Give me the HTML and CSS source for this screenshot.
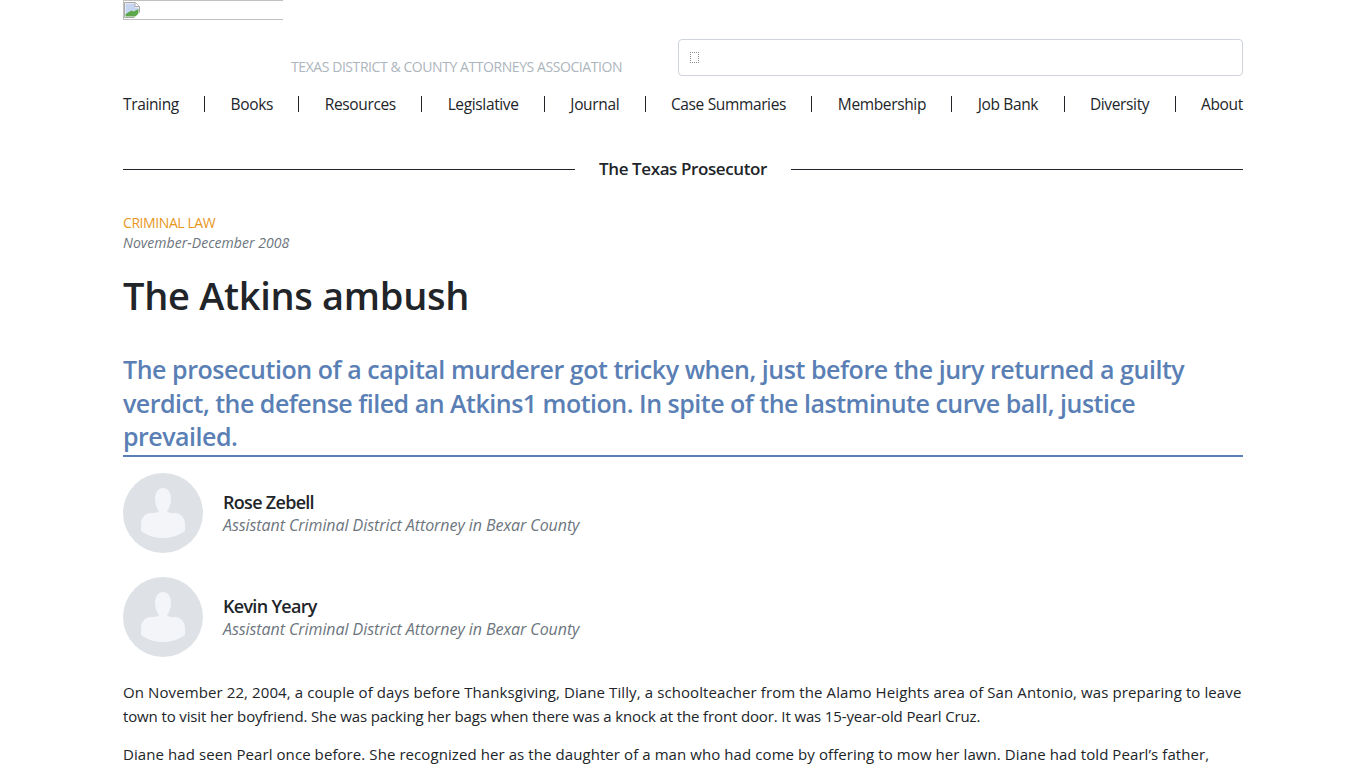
FILE: index.html
```html
<!DOCTYPE html>
<html lang="en">
<head>
    <meta charset="UTF-8">
    <meta name="viewport" content="width=device-width, initial-scale=1.0">
    <title>The Atkins ambush - TDCAA</title>
    <link rel="stylesheet" href="styles.css">
</head>
<body>
    <div class="container">
        <header class="header">
            <div class="brand">
                <div class="logo">
                    <svg class="broken-icon" width="16" height="16" viewBox="0 0 16 16">
                        <path d="M.5 .5h11l4 4v11h-15z" fill="#fff" stroke="#a9a9a9"/>
                        <path d="M1.500 1.500h9.500v4h3.500v2.500l-13 4z" fill="#c5d5f2"/>
                        <path d="M1.500 14.500v-2.500l6-3.500 2 1 5-2.500v7.500z" fill="#5ca84a"/>
                        <path d="M11 .5v4h4.500" fill="#fff" stroke="#a9a9a9"/>
                        <path d="M10 16l6-6v6z" fill="#fff"/>
                    </svg>
                </div>
                <div class="tagline">TEXAS DISTRICT &amp; COUNTY ATTORNEYS ASSOCIATION</div>
            </div>
            <div class="search"><span class="search-icon"></span></div>
        </header>

        <nav class="nav">
            <a href="#">Training</a><span class="sep"></span>
            <a href="#">Books</a><span class="sep"></span>
            <a href="#">Resources</a><span class="sep"></span>
            <a href="#">Legislative</a><span class="sep"></span>
            <a href="#">Journal</a><span class="sep"></span>
            <a href="#">Case Summaries</a><span class="sep"></span>
            <a href="#">Membership</a><span class="sep"></span>
            <a href="#">Job Bank</a><span class="sep"></span>
            <a href="#">Diversity</a><span class="sep"></span>
            <a href="#">About</a>
        </nav>

        <div class="section-title">The Texas Prosecutor</div>

        <div class="category">CRIMINAL LAW</div>
        <div class="issue">November-December 2008</div>
        <h1>The Atkins ambush</h1>
        <h2>The prosecution of a capital murderer got tricky when, just before the jury returned a guilty verdict, the defense filed an Atkins1 motion. In spite of the lastminute curve ball, justice prevailed.</h2>

        <div class="author">
            <svg class="avatar" viewBox="0 0 80 80">
                <circle cx="40" cy="40" r="40" fill="#dee2e6"/>
                <path d="M40 15c5 0 8 4.500 8 11 0 5-2 9.500-4 12.500 2 1 4 1.500 8 1.500 6 0 10 5 10 11v7c-6 4.500-14 7-22 7s-16-2.500-22-7v-7c0-6 4-11 10-11 4 0 6-.5 8-1.500-2-3-4-7.500-4-12.500 0-6.500 3-11 8-11z" fill="#f3f5f8"/>
            </svg>
            <div class="author-text">
                <div class="author-name">Rose Zebell</div>
                <div class="author-role">Assistant Criminal District Attorney in Bexar County</div>
            </div>
        </div>
        <div class="author">
            <svg class="avatar" viewBox="0 0 80 80">
                <circle cx="40" cy="40" r="40" fill="#dee2e6"/>
                <path d="M40 15c5 0 8 4.500 8 11 0 5-2 9.500-4 12.500 2 1 4 1.500 8 1.500 6 0 10 5 10 11v7c-6 4.500-14 7-22 7s-16-2.500-22-7v-7c0-6 4-11 10-11 4 0 6-.5 8-1.500-2-3-4-7.500-4-12.500 0-6.500 3-11 8-11z" fill="#f3f5f8"/>
            </svg>
            <div class="author-text">
                <div class="author-name">Kevin Yeary</div>
                <div class="author-role">Assistant Criminal District Attorney in Bexar County</div>
            </div>
        </div>

        <p>On November 22, 2004, a couple of days before Thanksgiving, Diane Tilly, a schoolteacher from the Alamo Heights area of San Antonio, was preparing to leave town to visit her boyfriend. She was packing her bags when there was a knock at the front door. It was 15-year-old Pearl Cruz.</p>
        <p>Diane had seen Pearl once before. She recognized her as the daughter of a man who had come by offering to mow her lawn. Diane had told Pearl’s father,</p>
    </div>
</body>
</html>
```

FILE: styles.css
```css
html, body {
    height: 768px;
    overflow: hidden;
}
body {
    margin: 0;
    background: #fff;
    color: #212529;
    font-family: "Open Sans", sans-serif;
    font-size: 15px;
    line-height: 24px;
}
.container {
    width: 1120px;
    margin: 0 auto;
}
.header {
    display: flex;
    justify-content: space-between;
    height: 92px;
}
.logo {
    width: 160px;
    height: 20px;
    box-sizing: border-box;
    border: 1px solid #c0c0c0;
    border-right: none;
    line-height: 0;
}
.broken-icon {
    margin: 1px 0 0 0;
}
.tagline {
    margin: 37px 0 0 168px;
    font-size: 14px;
    letter-spacing: -0.43px;
    line-height: 20px;
    color: #adb5bd;
    white-space: nowrap;
}
.search {
    width: 565px;
    height: 37px;
    margin-top: 39px;
    box-sizing: border-box;
    border: 1px solid #ced4da;
    border-radius: 4px;
    display: flex;
    align-items: center;
    padding-left: 11px;
}
.search-icon {
    width: 7px;
    height: 9px;
    border: 1px dotted #8a8f96;
}
.nav {
    display: flex;
    justify-content: space-between;
    align-items: center;
    height: 24px;
    font-size: 15.500px;
    letter-spacing: -0.36px;
}
.nav a {
    color: #212529;
    text-decoration: none;
}
.sep {
    width: 1px;
    height: 16px;
    background: #212529;
}
.section-title {
    display: flex;
    align-items: center;
    gap: 24px;
    margin-top: 39px;
    height: 28px;
    font-size: 17px;
    font-weight: 600;
    letter-spacing: -0.4px;
}
.section-title::before,
.section-title::after {
    content: "";
    flex: 1;
    height: 1px;
    background: #212529;
}
.category {
    margin-top: 30px;
    font-size: 14px;
    line-height: 20px;
    color: #e8961e;
    letter-spacing: -0.42px;
}
.issue {
    font-size: 14px;
    line-height: 20px;
    font-style: italic;
    color: #6c757d;
    letter-spacing: 0.05px;
}
h1 {
    margin: 16px 0 0;
    font-size: 38px;
    font-weight: 600;
    line-height: 52px;
    letter-spacing: -0.3px;
}
h2 {
    margin: 32px 0 0;
    padding-bottom: 1px;
    border-bottom: 2px solid #5a7fb5;
    color: #5a7fb5;
    font-size: 25px;
    font-weight: 600;
    line-height: 33.500px;
    letter-spacing: -0.5px;
}
h2::first-line {
    letter-spacing: -0.45px;
}
.author {
    display: flex;
    align-items: center;
    gap: 20px;
    margin-top: 16px;
    height: 80px;
}
.author + .author {
    margin-top: 24px;
}
.avatar {
    width: 80px;
    height: 80px;
}
.author-text {
    margin-bottom: 2px;
}
.author-name {
    font-size: 18px;
    font-weight: 600;
    line-height: 26px;
    letter-spacing: -0.7px;
}
.author-role {
    font-size: 16px;
    font-style: italic;
    color: #6c757d;
    line-height: 20px;
    letter-spacing: -0.07px;
}
p {
    margin: 23px 0 0;
    letter-spacing: -0.13px;
}
p::first-line {
    letter-spacing: 0.1px;
}
p + p {
    margin-top: 14px;
}
p + p::first-line {
    letter-spacing: 0.08px;
}
```
